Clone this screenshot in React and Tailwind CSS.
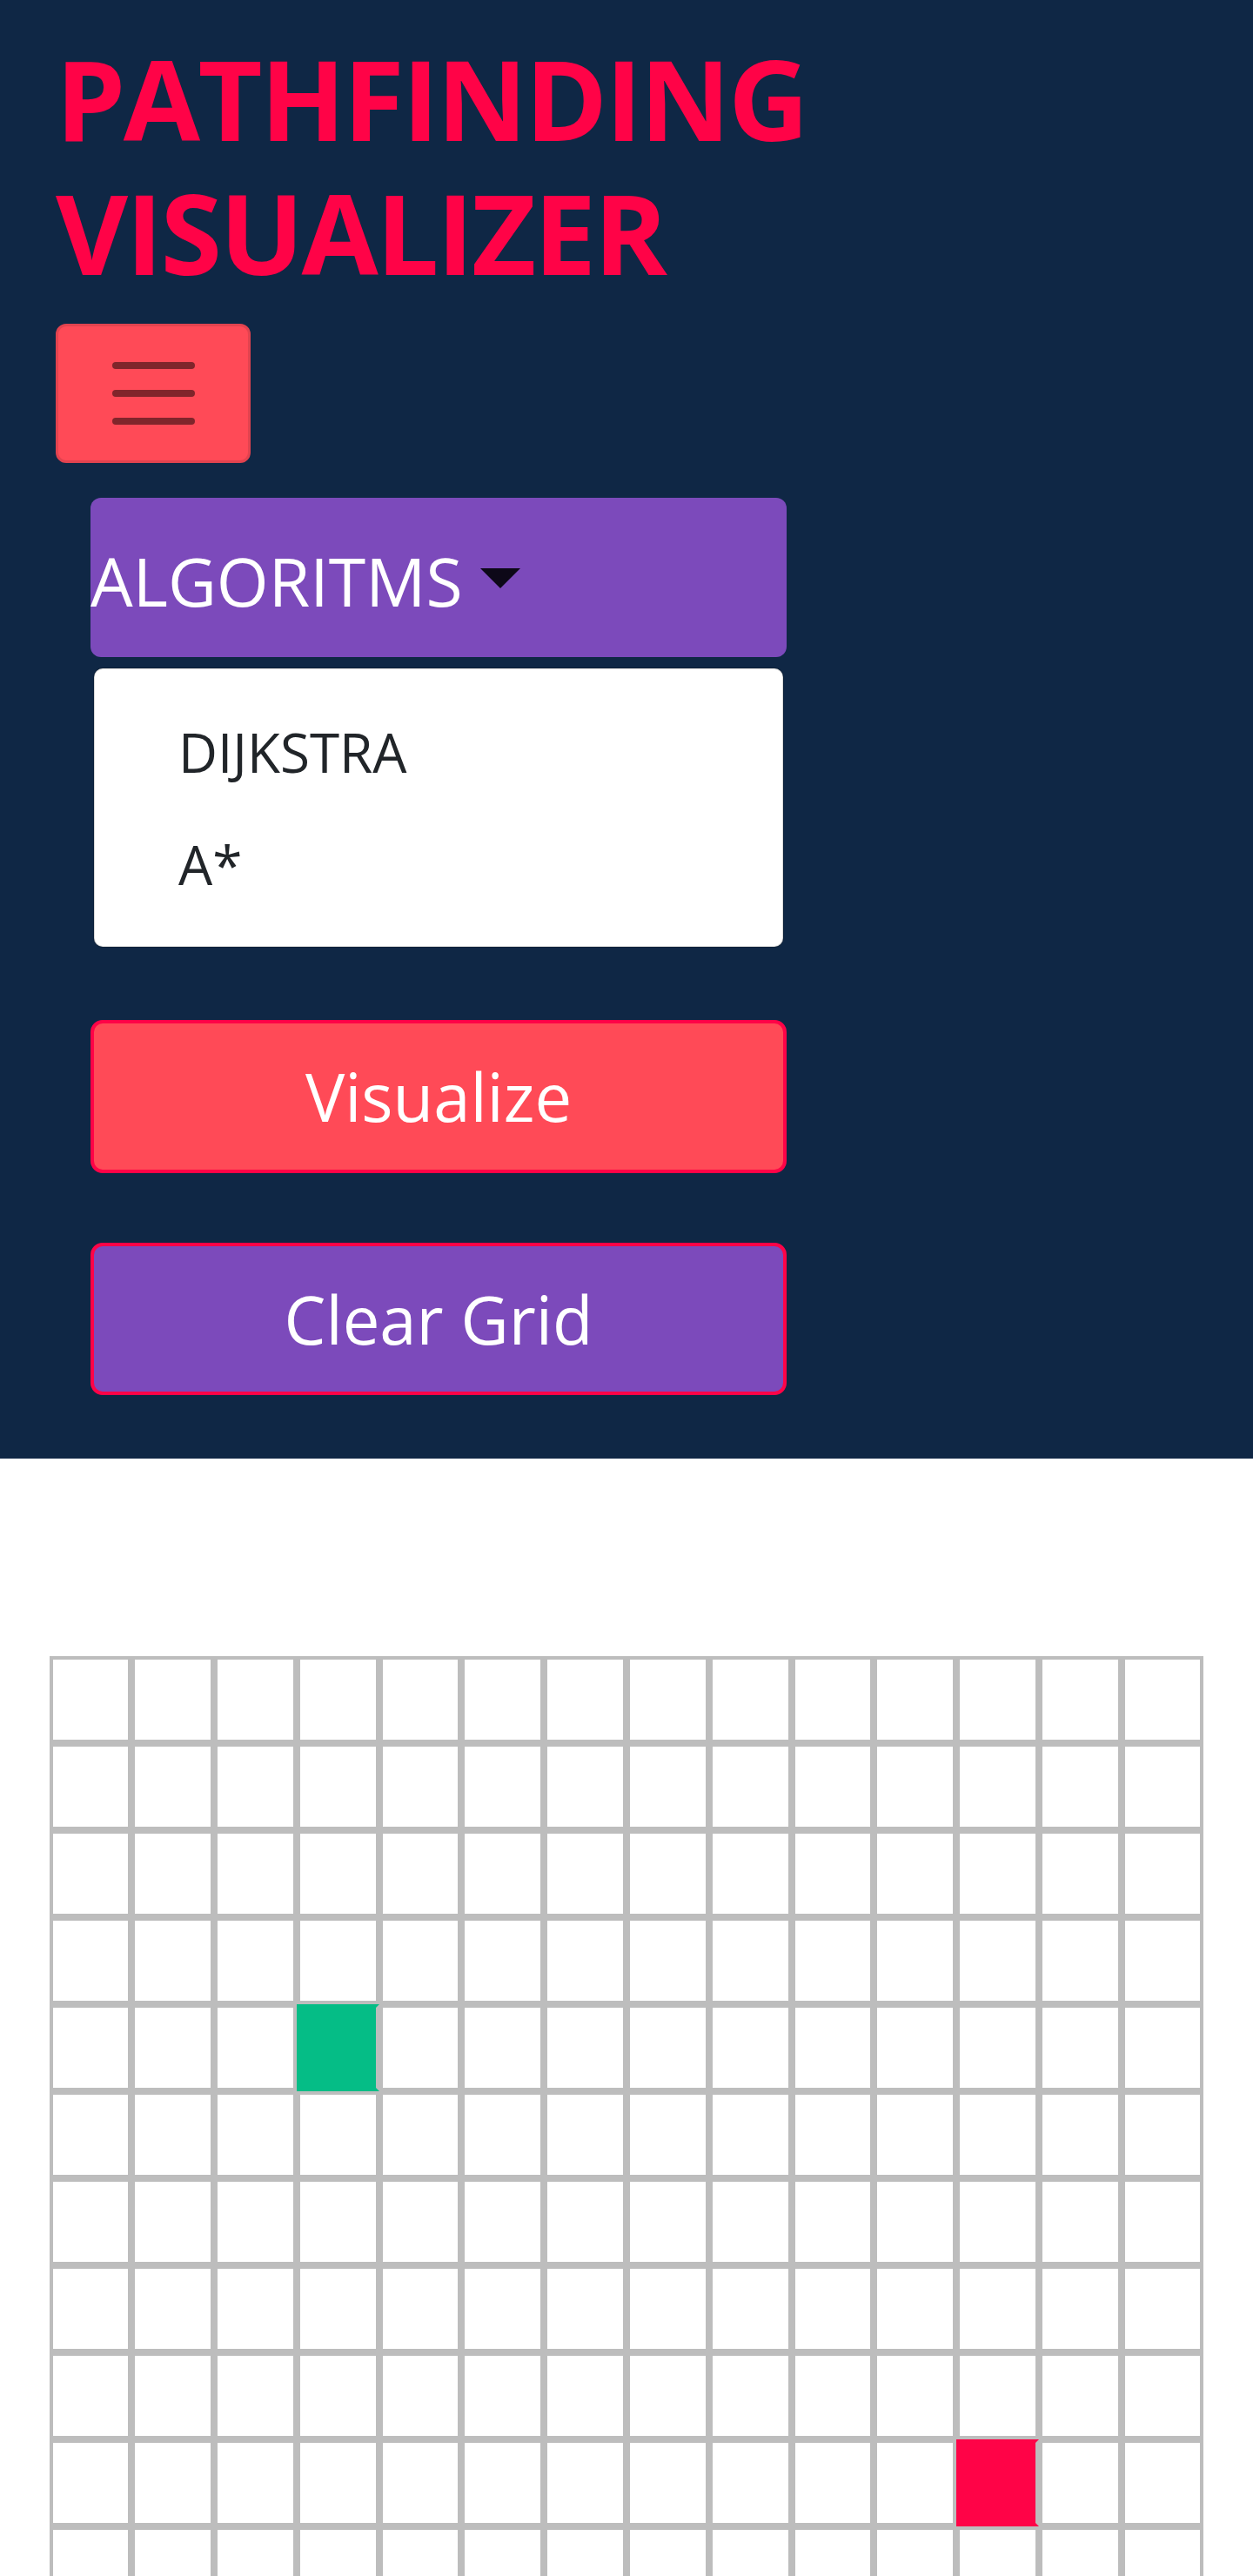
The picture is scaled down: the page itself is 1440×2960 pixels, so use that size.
import { useState } from "react";

// grid size and the two fixed nodes
const ROWS = 11;
const COLS = 14;
const START = { row: 4, col: 3 };
const FINISH = { row: 9, col: 11 };

const FONT = { fontFamily: '"Open Sans", "Noto Sans", sans-serif' };

const Cell = ({ row, col }) => {
  const isStart = row === START.row && col === START.col;
  const isFinish = row === FINISH.row && col === FINISH.col;

  if (isStart) {
    return <div className="h-[100px] border-4 border-[#05bd86] border-r-[#bdbdbd] bg-[#05bd86]" />;
  }
  if (isFinish) {
    return <div className="h-[100px] border-4 border-[#ff0347] border-r-[#bdbdbd] bg-[#ff0347]" />;
  }
  return <div className="h-[100px] border-4 border-[#bdbdbd] bg-white" />;
};

const Navbar = () => {
  // menu is shown expanded, like the reference
  const [algo, setAlgo] = useState(null);

  return (
    <header className="bg-[#0f2745] px-[64px] pt-[36px] pb-[73px]">
      {/* title */}
      <h1 className="text-[128px] font-bold leading-[153.6px] tracking-[-0.02em] text-[#ff0347]">
        <span className="block">PATHFINDING</span>
        <span className="block">VISUALIZER</span>
      </h1>

      {/* hamburger */}
      <button className="mt-[29px] flex h-[160px] w-[224px] flex-col items-center justify-center gap-[24px] rounded-[12px] border-[3px] border-[#e2434f] bg-[#ff4a57]">
        <span className="block h-[8px] w-[95px] rounded-full bg-[#80252b]" />
        <span className="block h-[8px] w-[95px] rounded-full bg-[#80252b]" />
        <span className="block h-[8px] w-[95px] rounded-full bg-[#80252b]" />
      </button>

      {/* collapsed nav */}
      <div className="w-[840px] pl-[40px]">
        <div className="mt-[40px] flex h-[183px] w-[800px] items-center rounded-[12px] bg-[#7c4abb] pt-[8px]">
          <span className="text-[77px] leading-normal text-white">ALGORITMS</span>
          <span className="ml-[20px] mb-[6px] h-0 w-0 border-x-[23.5px] border-t-[23px] border-x-transparent border-t-[#0d0818]" />
        </div>

        <ul className="mx-[4px] mt-[13px] rounded-[10px] border border-black/15 bg-white pt-[31px] pb-[29px] shadow-[0_0_0_1px_rgba(0,0,0,0.15)]">
          {["DIJKSTRA", "A*"].map((name) => (
            <li
              key={name}
              onClick={() => setAlgo(name)}
              className={`cursor-pointer py-[18px] pl-[96px] text-[62px] leading-[1.5] ${algo === name ? "text-black" : "text-[#212529]"}`}
            >
              {name}
            </li>
          ))}
        </ul>

        <button className="mt-[84px] flex h-[176px] w-[800px] items-center justify-center rounded-[14px] border-4 border-[#ff0347] bg-[#ff4a57] text-[76px] text-white">
          Visualize
        </button>
        <button className="mt-[80px] flex h-[175px] w-[800px] items-center justify-center rounded-[14px] border-4 border-[#ff0347] bg-[#7c4abb] text-[76px] text-white">
          Clear Grid
        </button>
      </div>
    </header>
  );
};

export default function App() {
  return (
    <div className="h-[2960px] overflow-hidden bg-white" style={FONT}>
      <Navbar />
      <div className="mx-auto mt-[227px] grid w-[1327px] grid-cols-14">
        {Array.from({ length: ROWS }).map((_, r) =>
          Array.from({ length: COLS }).map((_, c) => <Cell key={`${r}-${c}`} row={r} col={c} />)
        )}
      </div>
    </div>
  );
}
